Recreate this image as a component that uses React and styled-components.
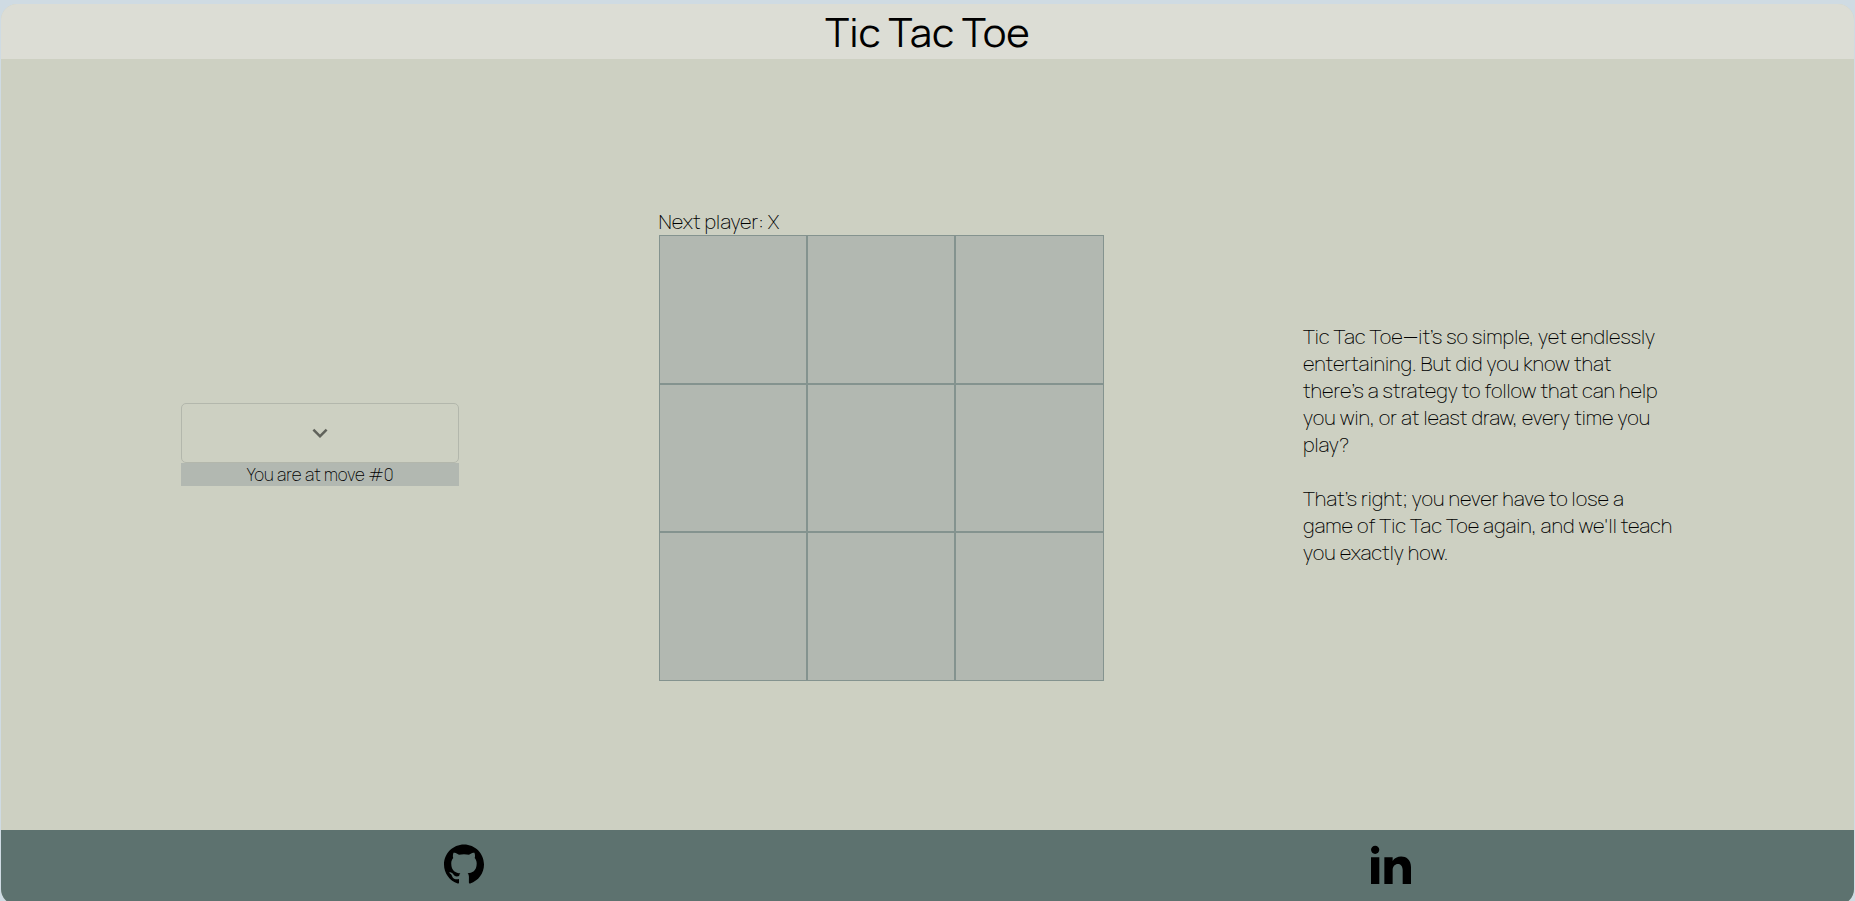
import React, { useState } from "react";
import styled, { createGlobalStyle } from "styled-components";
import { MdExpandMore } from "react-icons/md";
import { SiGithub } from "react-icons/si";

const GlobalStyle = createGlobalStyle`
  *, *::before, *::after { box-sizing: border-box; }
  body {
    margin: 0;
    background: #cfdbe3;
    color: #000;
    font-family: Manrope, Inter, "Liberation Sans", sans-serif;
    font-weight: 200;
  }
`;

const Viewport = styled.div`
  height: 100vh;
  overflow: hidden;
  padding: 4px 1px 0;
`;

const Page = styled.div`
  display: flex;
  flex-direction: column;
  height: 100vh;
  border-radius: 16px;
  overflow: hidden;
  background: #cdd0c2;
`;

const Header = styled.header`
  display: flex;
  justify-content: center;
  align-items: center;
  height: 55px;
  flex: none;
  background: #dcddd5;
`;

const Title = styled.h1`
  margin: 0;
  font-size: 40px;
  line-height: 55px;
  font-weight: 400;
`;

const Main = styled.main`
  display: flex;
  flex: 1;
  justify-content: space-between;
  align-items: center;
  padding: 0 180px;
`;

const History = styled.section`
  width: 15vw;
`;

const Toggle = styled.button`
  display: flex;
  width: 100%;
  height: 60px;
  align-items: center;
  justify-content: center;
  padding: 0;
  border: 1px solid #b3b7ac;
  border-radius: 5px;
  background: transparent;
  color: #60625b;
  font-size: 30px;
  cursor: pointer;
`;

const MoveList = styled.ol`
  margin: 0;
  padding: 0;
  list-style: none;
`;

const Move = styled.li`
  background: #b2b8b1;
  font-size: 17px;
  line-height: 23px;
  text-align: center;
`;

const Status = styled.p`
  margin: 0;
  font-size: 20px;
  line-height: 27px;
`;

const Board = styled.div`
  display: grid;
  grid-template-columns: repeat(3, 8vw);
  grid-auto-rows: 8vw;
`;

const Square = styled.button`
  padding: 0;
  border: 1px solid #84938f;
  border-radius: 0;
  background: #b2b8b1;
  color: #000;
  font: inherit;
  font-size: 64px;
  cursor: pointer;
`;

const About = styled.section`
  width: 20vw;
`;

const Paragraph = styled.p`
  margin: 0 0 27px;
  font-size: 20px;
  line-height: 27px;
  white-space: nowrap;

  &:last-child { margin-bottom: 0; }
`;

const Footer = styled.footer`
  display: flex;
  flex: none;
  justify-content: space-around;
  padding: 14px 0 21px;
  background: #5d726f;
`;

const SocialLink = styled.a`
  display: flex;
  color: #000;
  font-size: 40px;
`;

const LINES = [
  [0, 1, 2], [3, 4, 5], [6, 7, 8],
  [0, 3, 6], [1, 4, 7], [2, 5, 8],
  [0, 4, 8], [2, 4, 6],
];

function findWinner(squares) {
  const line = LINES.find(([a, b, c]) => squares[a] && squares[a] === squares[b] && squares[a] === squares[c]);
  return line ? squares[line[0]] : null;
}

function LinkedInIcon() {
  return (
    <svg width="1em" height="1em" viewBox="0 0 24 24" fill="currentColor" aria-hidden="true">
      <path d="M4.98 3.5c0 1.381-1.11 2.5-2.48 2.5s-2.48-1.119-2.48-2.5c0-1.38 1.11-2.5 2.48-2.5s2.48 1.12 2.48 2.5zm.02 4.5h-5v16h5v-16zm7.982 0h-4.968v16h4.969v-8.399c0-4.67 6.029-5.052 6.029 0v8.399h4.988v-10.131c0-7.88-8.922-7.593-11.018-3.714v-2.155z" />
    </svg>
  );
}

export default function App() {
  const [squares, setSquares] = useState(Array(9).fill(null));
  const [open, setOpen] = useState(true);
  const move = squares.filter(Boolean).length;
  const player = move % 2 === 0 ? "X" : "O";
  const winner = findWinner(squares);

  function play(index) {
    if (squares[index] || winner) return;
    setSquares(squares.map((value, i) => (i === index ? player : value)));
  }

  return (
    <Viewport>
      <GlobalStyle />
      <Page>
        <Header>
          <Title>Tic Tac Toe</Title>
        </Header>
        <Main>
          <History>
            <Toggle type="button" aria-label="Toggle move history" aria-expanded={open} onClick={() => setOpen(!open)}>
              <MdExpandMore />
            </Toggle>
            {open && (
              <MoveList>
                <Move>You are at move #{move}</Move>
              </MoveList>
            )}
          </History>
          <section>
            <Status>{winner ? `Winner: ${winner}` : `Next player: ${player}`}</Status>
            <Board>
              {squares.map((value, i) => (
                <Square key={i} type="button" aria-label={`Square ${i + 1}`} onClick={() => play(i)}>
                  {value}
                </Square>
              ))}
            </Board>
          </section>
          <About>
            <Paragraph>
              Tic Tac Toe—it’s so simple, yet endlessly<br />
              entertaining. But did you know that<br />
              there’s a strategy to follow that can help<br />
              you win, or at least draw, every time you<br />
              play?
            </Paragraph>
            <Paragraph>
              That’s right; you never have to lose a<br />
              game of Tic Tac Toe again, and we'll teach<br />
              you exactly how.
            </Paragraph>
          </About>
        </Main>
        <Footer>
          <SocialLink href="https://github.com" aria-label="GitHub"><SiGithub /></SocialLink>
          <SocialLink href="https://www.linkedin.com" aria-label="LinkedIn"><LinkedInIcon /></SocialLink>
        </Footer>
      </Page>
    </Viewport>
  );
}
